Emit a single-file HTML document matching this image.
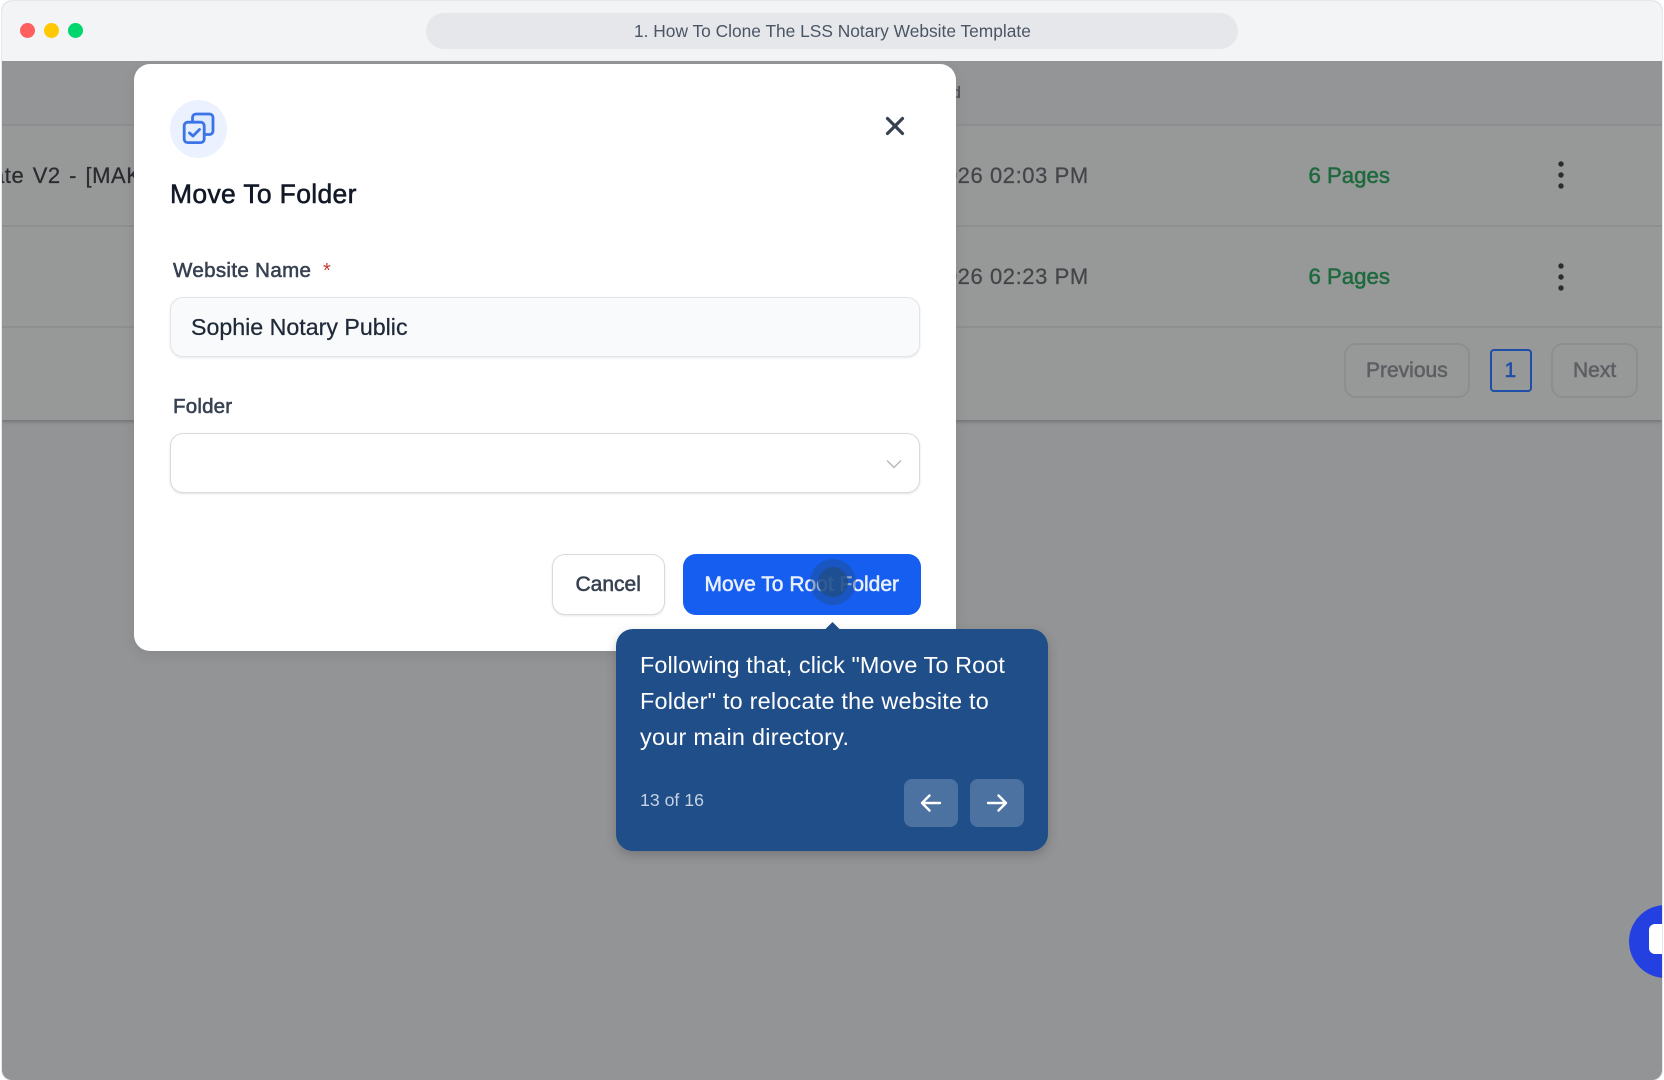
<!DOCTYPE html>
<html lang="en">
<head>
<meta charset="utf-8">
<title>How To Clone The LSS Notary Website Template</title>
<style>
html,body{margin:0;padding:0;width:1664px;height:1080px;overflow:hidden;background:#fff;}
body{font-family:"Liberation Sans",sans-serif;position:relative;}
#page{position:absolute;left:0;top:0;width:1664px;height:1080px;filter:blur(.3px);}
.a{position:absolute;box-sizing:border-box;}
.t{position:absolute;white-space:nowrap;line-height:1;}
.m{-webkit-text-stroke:.55px currentColor;}
.r{-webkit-text-stroke:.25px currentColor;}
#win{left:2px;top:1px;width:1660px;height:1079px;border-radius:10px;overflow:hidden;background:#939495;box-shadow:0 0 0 1px #e5e7eb;}
.line{left:0;width:1660px;height:2px;background:#8d8f8f;}
</style>
</head>
<body>
<div id="page">
<div class="a" id="win">
  <!-- background table (window coordinates: x-2, y-1) -->
  <div class="a" style="left:0;top:60px;width:1660px;height:359px;background:#979898;box-shadow:0 2px 3px rgba(60,60,70,.35);"></div>
  <div class="a" style="left:0;top:60px;width:1660px;height:63px;background:#949596;"></div>
  <div class="a line" style="top:122.500px;"></div>
  <div class="a line" style="top:224px;"></div>
  <div class="a line" style="top:325px;"></div>

  <div class="t r" style="left:-10px;top:164px;font-size:22px;letter-spacing:.55px;word-spacing:1.800px;color:#2a2b2f;">ate V2 - [MAKE</div>
  <div class="t r" style="left:949.500px;top:83px;font-size:17px;color:#4e5054;">d</div>
  <div class="t r" style="left:930px;top:164px;font-size:22px;letter-spacing:.58px;color:#434549;">2026 02:03 PM</div>
  <div class="t r" style="left:930px;top:265px;font-size:22px;letter-spacing:.58px;color:#434549;">2026 02:23 PM</div>
  <div class="t m" style="left:1306.500px;top:164px;font-size:22.200px;color:#1f6a3f;">6 Pages</div>
  <div class="t m" style="left:1306.500px;top:265px;font-size:22.200px;color:#1f6a3f;">6 Pages</div>
  <svg class="a" style="left:1549px;top:154px;" width="20" height="40" viewBox="0 0 20 40"><circle cx="10" cy="9" r="2.7" fill="#2b2c30"/><circle cx="10" cy="20" r="2.7" fill="#2b2c30"/><circle cx="10" cy="31" r="2.7" fill="#2b2c30"/></svg>
  <svg class="a" style="left:1549px;top:256px;" width="20" height="40" viewBox="0 0 20 40"><circle cx="10" cy="9" r="2.7" fill="#2b2c30"/><circle cx="10" cy="20" r="2.7" fill="#2b2c30"/><circle cx="10" cy="31" r="2.7" fill="#2b2c30"/></svg>

  <div class="a" style="left:1342px;top:342px;width:126px;height:55px;border:2px solid #8d8f8f;border-radius:12px;"></div>
  <div class="t m" style="left:1364px;top:359px;font-size:21px;color:#5d5f63;">Previous</div>
  <div class="a" style="left:1487.500px;top:348px;width:42px;height:43px;border:2px solid #1f4ea8;border-radius:4px;"></div>
  <div class="t m" style="left:1502.500px;top:359px;font-size:21px;color:#1f4ea8;">1</div>
  <div class="a" style="left:1549px;top:342px;width:87px;height:55px;border:2px solid #8d8f8f;border-radius:12px;"></div>
  <div class="t m" style="left:1571px;top:359px;font-size:21px;color:#5d5f63;">Next</div>

  <!-- chat bubble -->
  <div class="a" style="left:1627px;top:904px;width:73px;height:73px;border-radius:50%;background:#2540e0;"></div>
  <div class="a" style="left:1647px;top:923px;width:40px;height:30px;border-radius:6px;background:#fff;"></div>

  <!-- browser bar -->
  <div class="a" style="left:0;top:0;width:1660px;height:60px;background:#f3f4f6;"></div>
  <div class="a" style="left:424px;top:12px;width:812px;height:36px;border-radius:18px;background:#e5e7eb;"></div>
  <div class="t" style="left:632px;top:22px;font-size:17.350px;color:#4b5563;">1. How To Clone The LSS Notary Website Template</div>
  <div class="a" style="left:18px;top:22px;width:15px;height:15px;border-radius:50%;background:#ff5f5f;"></div>
  <div class="a" style="left:42px;top:22px;width:15px;height:15px;border-radius:50%;background:#ffc800;"></div>
  <div class="a" style="left:66px;top:22px;width:15px;height:15px;border-radius:50%;background:#00d66b;"></div>
</div>

<!-- modal -->
<div class="a" style="left:133.500px;top:64px;width:822.500px;height:587px;background:#fff;border-radius:16px;box-shadow:0 4px 12px rgba(60,60,70,.12);"></div>
<div class="a" style="left:170px;top:100px;width:57px;height:58px;border-radius:50%;background:#ebf1fe;"></div>
<svg class="a" style="left:170px;top:100px;" width="58" height="58" viewBox="170 100 58 58" fill="none" stroke="#3b74e8" stroke-width="2.8" stroke-linecap="round" stroke-linejoin="round">
  <path d="M192.500 122v-4.500a3.500 3.500 0 0 1 3.500-3.500h13.500a3.500 3.500 0 0 1 3.500 3.500V131a3.500 3.500 0 0 1-3.500 3.500H205" fill="#dfe9fd"/>
  <rect x="184.200" y="122.200" width="20" height="20.400" rx="3.500" fill="#e6eefd"/>
  <path d="M189.500 133l3.500 3 6.500-6.500"/>
</svg>
<svg class="a" style="left:880px;top:111px;" width="30" height="30" viewBox="0 0 30 30" fill="none" stroke="#374151" stroke-width="3.2" stroke-linecap="round"><path d="M7.500 7.500l15 15M22.500 7.500l-15 15"/></svg>
<div class="t m" style="left:170px;top:180.500px;font-size:26.500px;letter-spacing:.33px;color:#111827;">Move To Folder</div>
<div class="t m" style="left:173px;top:260.500px;font-size:20.500px;letter-spacing:.35px;color:#374151;">Website Name</div>
<div class="t" style="left:323px;top:260.500px;font-size:20px;color:#c43b33;">*</div>
<div class="a" style="left:170px;top:297px;width:750px;height:60px;background:#f9fafb;border:1.5px solid #e2e4e9;border-radius:13px;box-shadow:0 1px 2px rgba(16,24,40,.1);"></div>
<div class="t r" style="left:191px;top:316px;font-size:23.200px;color:#1f2937;">Sophie Notary Public</div>
<div class="t m" style="left:173px;top:397px;font-size:20.500px;letter-spacing:.2px;color:#374151;">Folder</div>
<div class="a" style="left:170px;top:433px;width:750px;height:60px;background:#fff;border:1.5px solid #d8dae0;border-radius:13px;box-shadow:0 1px 2px rgba(16,24,40,.12);"></div>
<svg class="a" style="left:883.500px;top:456.500px;" width="20" height="14" viewBox="0 0 20 14" fill="none" stroke="#b4b8c0" stroke-width="1.4"><path d="M3 3.500l7 7 7-7"/></svg>
<div class="a" style="left:552px;top:554px;width:113px;height:61px;background:#fff;border:1.5px solid #d8dae0;border-radius:13px;box-shadow:0 1px 2px rgba(16,24,40,.1);"></div>
<div class="t m" style="left:575.500px;top:574px;font-size:21px;color:#374151;">Cancel</div>
<div class="a" style="left:682.500px;top:554px;width:238px;height:61px;background:#155eef;border-radius:13px;"></div>
<div class="t m" style="left:704.500px;top:574px;font-size:21px;color:#eaf0fd;">Move To Root Folder</div>
<div class="a" style="left:810px;top:559px;width:46px;height:46px;border-radius:50%;background:rgba(32,78,137,.45);"></div>
<div class="a" style="left:818px;top:567px;width:30px;height:30px;border-radius:50%;background:rgba(32,78,137,.85);"></div>

<!-- tooltip -->
<div class="a" style="left:825px;top:622px;width:15px;height:15px;"><svg width="15" height="15" viewBox="0 0 15 15"><path d="M7.500 0L15 7.500H0z" fill="#204e89"/></svg></div>
<div class="a" style="left:616px;top:629px;width:432px;height:222px;background:#204e89;border-radius:17px;box-shadow:0 4px 10px rgba(40,40,50,.25);"></div>
<div class="t" style="left:640px;top:654px;font-size:23.400px;letter-spacing:.1px;color:#fff;">Following that, click "Move To Root</div>
<div class="t" style="left:640px;top:690px;font-size:23.400px;letter-spacing:.23px;color:#fff;">Folder" to relocate the website to</div>
<div class="t" style="left:640px;top:726px;font-size:23.400px;letter-spacing:.28px;color:#fff;">your main directory.</div>
<div class="t" style="left:640px;top:792px;font-size:17.700px;color:#c6d2e2;">13 of 16</div>
<div class="a" style="left:904px;top:779px;width:54px;height:48px;border-radius:8px;background:#4c72a2;"></div>
<div class="a" style="left:970px;top:779px;width:54px;height:48px;border-radius:8px;background:#4c72a2;"></div>
<svg class="a" style="left:904px;top:779px;" width="54" height="48" viewBox="0 0 54 48" fill="none" stroke="#fff" stroke-width="2.4" stroke-linecap="round" stroke-linejoin="round"><path d="M36 24H18M25.500 16.500L18 24l7.500 7.500"/></svg>
<svg class="a" style="left:970px;top:779px;" width="54" height="48" viewBox="0 0 54 48" fill="none" stroke="#fff" stroke-width="2.4" stroke-linecap="round" stroke-linejoin="round"><path d="M18 24h18M28.500 16.500L36 24l-7.500 7.500"/></svg>
</div>
</body>
</html>
